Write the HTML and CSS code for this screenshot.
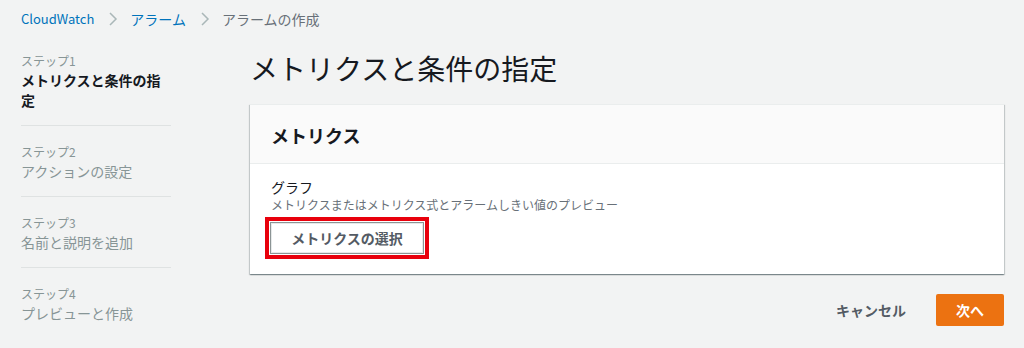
FILE: index.html
```html
<!DOCTYPE html>
<html lang="ja">
<head>
<meta charset="utf-8">
<link rel="stylesheet" href="styles.css">
</head>
<body>
<div class="page">
  <nav class="crumbs">
    <a class="crumb-link">CloudWatch</a>
    <svg class="chev" width="10" height="14" viewBox="0 0 10 14"><polyline points="2,1 8,7 2,13" fill="none" stroke="#aab7b8" stroke-width="1.5"/></svg>
    <a class="crumb-link">アラーム</a>
    <svg class="chev" width="10" height="14" viewBox="0 0 10 14"><polyline points="2,1 8,7 2,13" fill="none" stroke="#aab7b8" stroke-width="1.5"/></svg>
    <span class="crumb-current">アラームの作成</span>
  </nav>
  <div class="layout">
    <aside class="steps">
      <div class="step">
        <div class="step-label">ステップ1</div>
        <div class="step-name current">メトリクスと条件の指定</div>
      </div>
      <div class="step">
        <div class="step-label">ステップ2</div>
        <div class="step-name">アクションの設定</div>
      </div>
      <div class="step">
        <div class="step-label">ステップ3</div>
        <div class="step-name">名前と説明を追加</div>
      </div>
      <div class="step last">
        <div class="step-label">ステップ4</div>
        <div class="step-name">プレビューと作成</div>
      </div>
    </aside>
    <main class="main">
      <h1 class="title">メトリクスと条件の指定</h1>
      <section class="card">
        <div class="card-head">メトリクス</div>
        <div class="card-body">
          <div class="field-label">グラフ</div>
          <div class="field-desc">メトリクスまたはメトリクス式とアラームしきい値のプレビュー</div>
          <button class="btn-select">メトリクスの選択</button>
        </div>
      </section>
      <div class="actions">
        <button class="btn-cancel">キャンセル</button>
        <button class="btn-next">次へ</button>
      </div>
    </main>
  </div>
</div>
</body>
</html>
```

FILE: styles.css
```css
* { box-sizing: border-box; }
html, body { margin: 0; padding: 0; }
body {
  background: #f2f3f3;
  font-family: "Noto Sans CJK JP", "Noto Sans", sans-serif;
  color: #16191f;
  width: 1024px;
  height: 348px;
  overflow: hidden;
}
.page { padding: 0 20px 0 21px; }
.crumbs {
  display: flex;
  align-items: center;
  height: 35px;
  padding-top: 9px;
  padding-bottom: 6px;
  font-size: 14px;
  line-height: 20px;
}
.crumb-link { color: #0073bb; }
.crumbs .crumb-link:first-child { font-size: 13px; }
.chev { margin: 0 12px 0 14px; }
.crumb-current { color: #687078; }
.layout { display: flex; gap: 79px; }
.steps { width: 150px; flex: none; }
.step {
  padding: 16px 0 15px;
  border-bottom: 1px solid #dfe2e2;
}
.step.last { border-bottom: none; }
.step-label { font-size: 12px; line-height: 19px; color: #879596; }
.step-name { font-size: 14px; line-height: 20px; color: #879596; }
.step-name.current { color: #16191f; font-weight: 700; }
.main { flex: 1; min-width: 0; }
.title {
  margin: 15px 0 18px;
  font-size: 28px;
  line-height: 36px;
  font-weight: 400;
  color: #16191f;
}
.card {
  background: #fff;
  border-top: 1px solid #eaeded;
  box-shadow: 0 1px 1px 0 rgba(0,28,36,.3), 1px 1px 1px 0 rgba(0,28,36,.15), -1px 1px 1px 0 rgba(0,28,36,.15);
}
.card-head {
  background: #fafafa;
  border-bottom: 1px solid #eaeded;
  padding: 19px 21px 17px;
  font-size: 18px;
  line-height: 22px;
  font-weight: 700;
}
.card-body { padding: 13px 21px 20px 20px; }
.field-label { font-size: 14px; line-height: 20px; color: #16191f; padding-left: 1px; }
.field-desc { font-size: 12px; line-height: 16px; color: #687078; padding-left: 1px; }
.btn-select {
  display: block;
  margin-top: 9px;
  width: 154px;
  height: 32px;
  background: #fff;
  border: 1px solid #8c9495;
  box-shadow: inset 0 0 0 1px #e6e9e9;
  font-family: inherit;
  font-size: 14px;
  font-weight: 700;
  color: #545b64;
  outline: 4px solid #e8000c;
  outline-offset: 1px;
  padding: 0;
}
.actions {
  display: flex;
  justify-content: flex-end;
  align-items: center;
  margin-top: 20px;
  gap: 10px;
}
.btn-cancel, .btn-next {
  font-family: inherit;
  font-size: 14px;
  font-weight: 700;
  height: 32px;
  padding: 0 20px;
  border: none;
}
.btn-cancel { background: transparent; color: #545b64; }
.btn-next { background: #ec7211; color: #fff; border-radius: 2px; }
```
